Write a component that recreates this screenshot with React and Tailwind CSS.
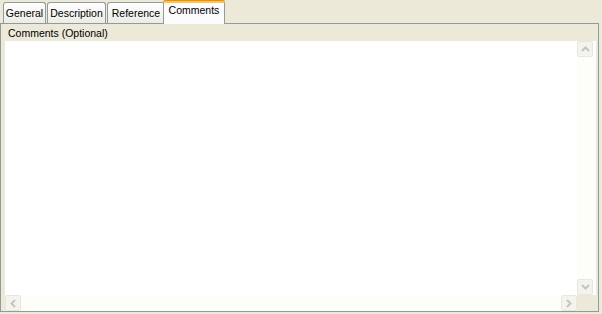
import React from "react";

const font = { fontFamily: '"Liberation Sans", Arial, sans-serif' };

function Tab({ label, selected, w }) {
  if (selected) {
    return (
      <div className={`relative z-10 -mb-px -ml-[3px] flex h-[24px] flex-col rounded-t-[3px] border-x border-[#919b9c] bg-[#fcfcfe] ${w}`}>
        <div className="-mx-px h-[3px] rounded-t-[3px] bg-[#ffc83c] border-t border-[#e68b2c]" />
        <div className="pt-[1px] text-center text-[10.5px] leading-[13px] text-black">{label}</div>
      </div>
    );
  }
  return (
    <div className={`mt-[2px] flex h-[21px] items-start justify-center rounded-t-[3px] border border-b-0 border-[#919b9c] bg-gradient-to-b from-[#ffffff] to-[#ecebe6] pt-[4px] text-[10.5px] leading-[13px] text-black ${w}`}>
      {label}
    </div>
  );
}

function Btn({ children }) {
  return (
    <div className="flex h-[16px] w-[16px] items-center justify-center rounded-[2px] border border-[#e8e7df] bg-[#f4f3ee]">
      {children}
    </div>
  );
}

const chev = "#c6c5bd";

export default function App() {
  return (
    <div style={font} className="h-[314px] w-[602px] overflow-hidden bg-[#ece9d8]">
      <div className="flex items-end gap-[1px] pl-[3px]">
        <Tab label="General" w="w-[43px]" />
        <Tab label="Description" w="w-[59px]" />
        <Tab label="Reference" w="w-[58px]" />
        <Tab label="Comments" selected w="w-[62px]" />
      </div>
      <div className="flex h-[289px] w-[599px] flex-col border border-[#919b9c] bg-[#ece9d8] pl-[4px] pr-[2px]">
        <div className="pl-[3px] pt-[3px] text-[10.5px] leading-[13px] text-black h-[17px]">Comments (Optional)</div>
        <div className="flex flex-1 flex-col bg-white">
          <div className="flex flex-1">
            <div className="flex-1" />
            <div className="flex w-[17px] flex-col bg-[#fdfdfa] mr-[2px]">
              <Btn>
                <svg width="9" height="6" viewBox="0 0 9 6"><path d="M1 5 L4.5 1.5 L8 5" fill="none" stroke={chev} strokeWidth="2" /></svg>
              </Btn>
              <div className="flex-1" />
              <Btn>
                <svg width="9" height="6" viewBox="0 0 9 6"><path d="M1 1 L4.5 4.5 L8 1" fill="none" stroke={chev} strokeWidth="2" /></svg>
              </Btn>
            </div>
          </div>
          <div className="flex h-[16px] bg-[#fdfdfa]">
            <Btn>
              <svg width="6" height="9" viewBox="0 0 6 9"><path d="M5 1 L1.5 4.5 L5 8" fill="none" stroke={chev} strokeWidth="2" /></svg>
            </Btn>
            <div className="flex-1" />
            <Btn>
              <svg width="6" height="9" viewBox="0 0 6 9"><path d="M1 1 L4.5 4.5 L1 8" fill="none" stroke={chev} strokeWidth="2" /></svg>
            </Btn>
            <div className="w-[19px] bg-[#ece9d8]" />
          </div>
        </div>
      </div>
    </div>
  );
}
